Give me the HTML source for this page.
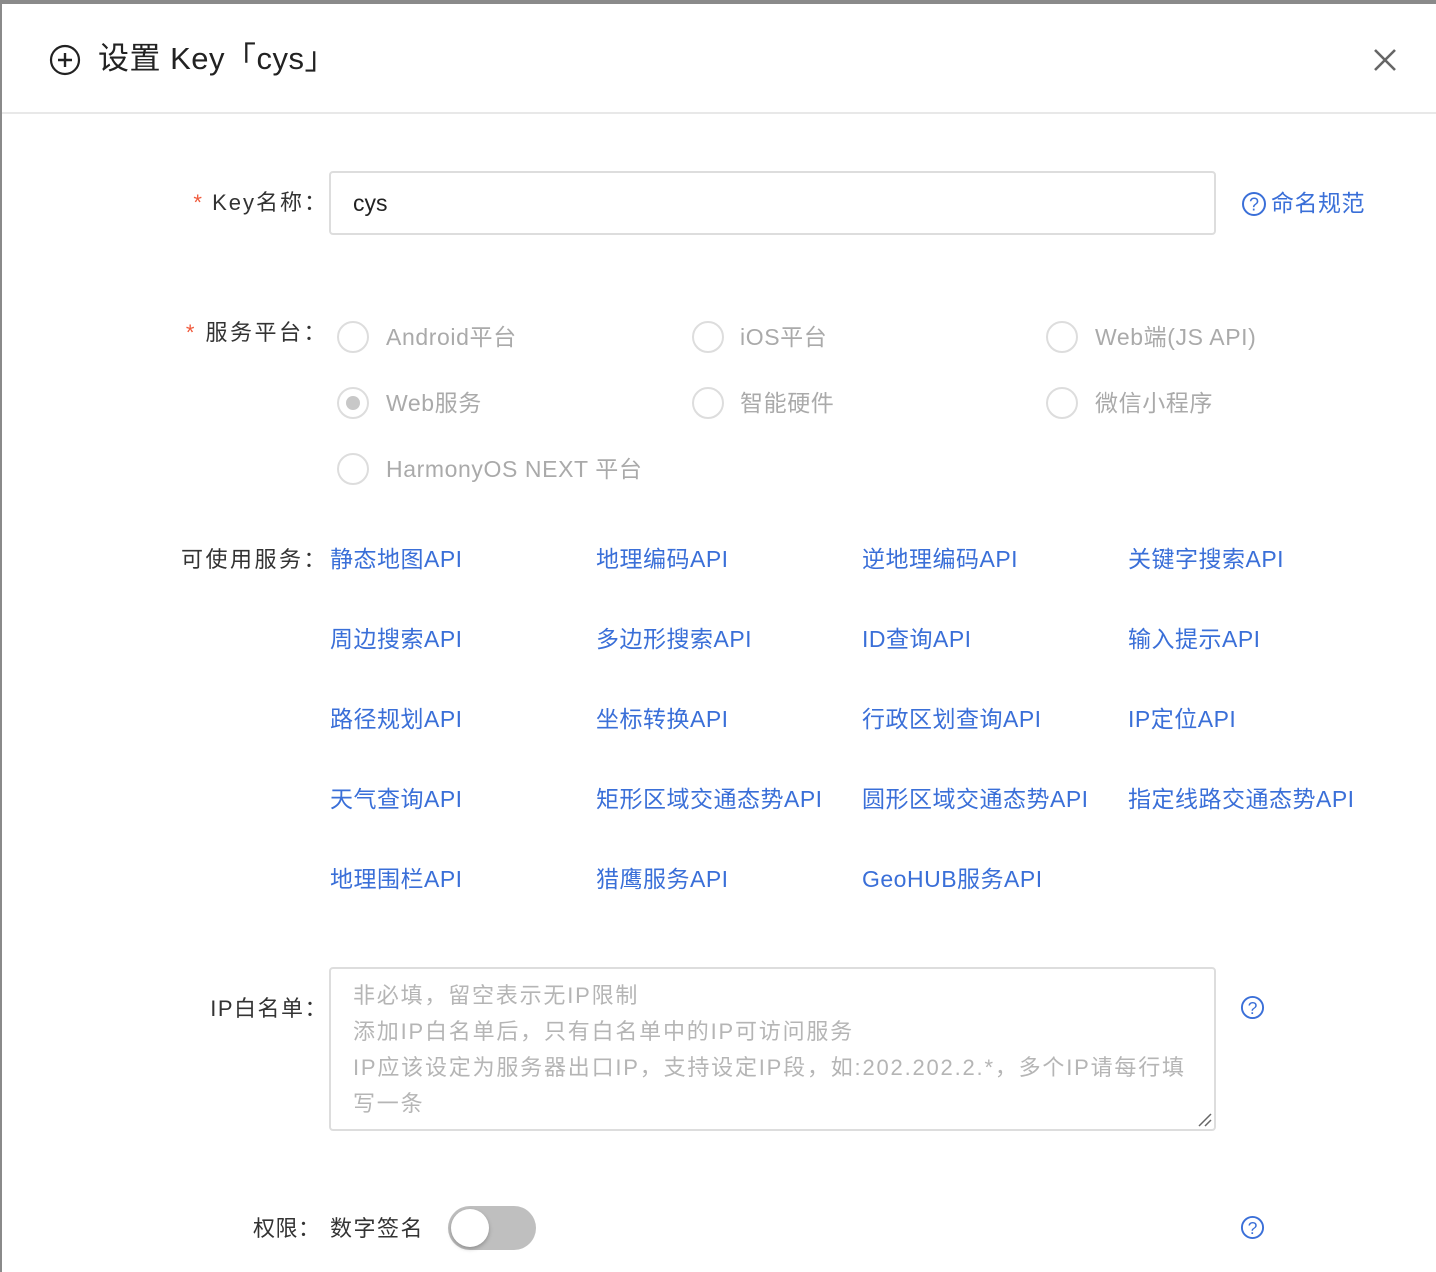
<!DOCTYPE html>
<html><head><meta charset="utf-8"><style>
*{margin:0;padding:0;box-sizing:border-box}
body{width:1436px;height:1272px;overflow:hidden;background:#fff;position:relative;font-family:"Liberation Sans","Noto Sans CJK SC",sans-serif;color:#333}
.a{position:absolute;white-space:nowrap;line-height:1}
.lbl{font-size:22px;color:#333;letter-spacing:0.5px}
.rl{position:absolute;right:1108px;white-space:nowrap;line-height:1;text-align:right;letter-spacing:2.5px}
.req{color:#f05a3c}
.lk{font-size:23px;color:#3a6fd8;letter-spacing:0.5px}
.r{position:absolute;width:32px;height:32px;border:2px solid #ddd;border-radius:50%}
.rt{font-size:23px;color:#aaa;letter-spacing:0.6px}
</style></head><body>
<div style="position:absolute;left:0;top:0;width:1436px;height:4px;background:#8a8a8a"></div>
<div style="position:absolute;left:0;top:0;width:2px;height:1272px;background:#8a8a8a"></div>
<div style="position:absolute;left:2px;top:112px;width:1434px;height:2px;background:#e8e8e8"></div>

<svg class="a" style="left:49px;top:44px" width="32" height="32" viewBox="0 0 32 32"><circle cx="16" cy="16" r="14" fill="none" stroke="#222" stroke-width="2.2"/><path d="M16 9v14M9 16h14" stroke="#222" stroke-width="2.4"/></svg>
<div class="a" style="left:98px;top:43px;font-size:31px;color:#222;letter-spacing:0.5px">设置 Key「cys」</div>
<svg class="a" style="left:1373px;top:48px" width="24" height="24" viewBox="0 0 24 24"><path d="M2 2L22 22M22 2L2 22" stroke="#666" stroke-width="2.6"/></svg>

<div class="rl lbl" style="top:192px;letter-spacing:2px"><span class="req">*</span> Key名称：</div>
<div style="position:absolute;left:329px;top:171px;width:887px;height:64px;border:2px solid #ddd;border-radius:4px"></div>
<div class="a" style="left:353px;top:192px;font-size:23px;color:#222">cys</div>
<svg class="a" style="left:1241px;top:191px" width="26" height="26" viewBox="0 0 26 26"><circle cx="13" cy="13" r="11" fill="none" stroke="#3a6fd8" stroke-width="2"/><text x="13" y="19.5" font-size="18" text-anchor="middle" fill="#3a6fd8" font-family="Liberation Sans">?</text></svg>
<div class="a lk" style="left:1271px;top:192px">命名规范</div>

<div class="rl lbl" style="top:322px;letter-spacing:2.5px"><span class="req">*</span> 服务平台：</div>
<div class="r" style="left:337px;top:321px"></div><div class="a rt" style="left:386px;top:326px">Android平台</div>
<div class="r" style="left:692px;top:321px"></div><div class="a rt" style="left:740px;top:326px">iOS平台</div>
<div class="r" style="left:1046px;top:321px"></div><div class="a rt" style="left:1095px;top:326px">Web端(JS API)</div>
<div class="r" style="left:337px;top:387px"><div style="position:absolute;left:7px;top:7px;width:14px;height:14px;border-radius:50%;background:#c8c8c8"></div></div><div class="a rt" style="left:386px;top:392px">Web服务</div>
<div class="r" style="left:692px;top:387px"></div><div class="a rt" style="left:740px;top:392px">智能硬件</div>
<div class="r" style="left:1046px;top:387px"></div><div class="a rt" style="left:1095px;top:392px">微信小程序</div>
<div class="r" style="left:337px;top:453px"></div><div class="a rt" style="left:386px;top:458px">HarmonyOS NEXT 平台</div>

<div class="rl lbl" style="top:549px;letter-spacing:2.5px">可使用服务：</div>
<div class="a lk" style="left:330px;top:548px">静态地图API</div>
<div class="a lk" style="left:596px;top:548px">地理编码API</div>
<div class="a lk" style="left:862px;top:548px">逆地理编码API</div>
<div class="a lk" style="left:1128px;top:548px">关键字搜索API</div>
<div class="a lk" style="left:330px;top:628px">周边搜索API</div>
<div class="a lk" style="left:596px;top:628px">多边形搜索API</div>
<div class="a lk" style="left:862px;top:628px">ID查询API</div>
<div class="a lk" style="left:1128px;top:628px">输入提示API</div>
<div class="a lk" style="left:330px;top:708px">路径规划API</div>
<div class="a lk" style="left:596px;top:708px">坐标转换API</div>
<div class="a lk" style="left:862px;top:708px">行政区划查询API</div>
<div class="a lk" style="left:1128px;top:708px">IP定位API</div>
<div class="a lk" style="left:330px;top:788px">天气查询API</div>
<div class="a lk" style="left:596px;top:788px">矩形区域交通态势API</div>
<div class="a lk" style="left:862px;top:788px">圆形区域交通态势API</div>
<div class="a lk" style="left:1128px;top:788px">指定线路交通态势API</div>
<div class="a lk" style="left:330px;top:868px">地理围栏API</div>
<div class="a lk" style="left:596px;top:868px">猎鹰服务API</div>
<div class="a lk" style="left:862px;top:868px">GeoHUB服务API</div>

<div class="rl lbl" style="top:998px;letter-spacing:1.5px">IP白名单：</div>
<div style="position:absolute;left:329px;top:967px;width:887px;height:164px;border:2px solid #ddd;border-radius:4px"></div>
<div style="position:absolute;left:353px;top:978px;font-size:22px;line-height:36px;color:#b5b5b5;white-space:nowrap;letter-spacing:1.8px">非必填，留空表示无IP限制<br>添加IP白名单后，只有白名单中的IP可访问服务<br>IP应该设定为服务器出口IP，支持设定IP段，如:202.202.2.*，多个IP请每行填<br>写一条</div>
<svg class="a" style="left:1197px;top:1112px" width="16" height="16" viewBox="0 0 16 16"><path d="M2 14L14 2M8 14L14 8" stroke="#666" stroke-width="1.5"/></svg>
<svg class="a" style="left:1240px;top:995px" width="25" height="25" viewBox="0 0 26 26"><circle cx="13" cy="13" r="11" fill="none" stroke="#3a6fd8" stroke-width="2"/><text x="13" y="19.5" font-size="18" text-anchor="middle" fill="#3a6fd8" font-family="Liberation Sans">?</text></svg>

<div class="a lbl" style="left:253px;top:1218px">权限：</div>
<div class="a lbl" style="left:330px;top:1218px;letter-spacing:1.5px">数字签名</div>
<div style="position:absolute;left:448px;top:1206px;width:88px;height:44px;border-radius:22px;background:#bfbfbf"><div style="position:absolute;left:3px;top:3px;width:38px;height:38px;border-radius:50%;background:#fff;box-shadow:0 2px 4px rgba(0,0,0,.25)"></div></div>
<svg class="a" style="left:1240px;top:1215px" width="25" height="25" viewBox="0 0 26 26"><circle cx="13" cy="13" r="11" fill="none" stroke="#3a6fd8" stroke-width="2"/><text x="13" y="19.5" font-size="18" text-anchor="middle" fill="#3a6fd8" font-family="Liberation Sans">?</text></svg>
</body></html>
